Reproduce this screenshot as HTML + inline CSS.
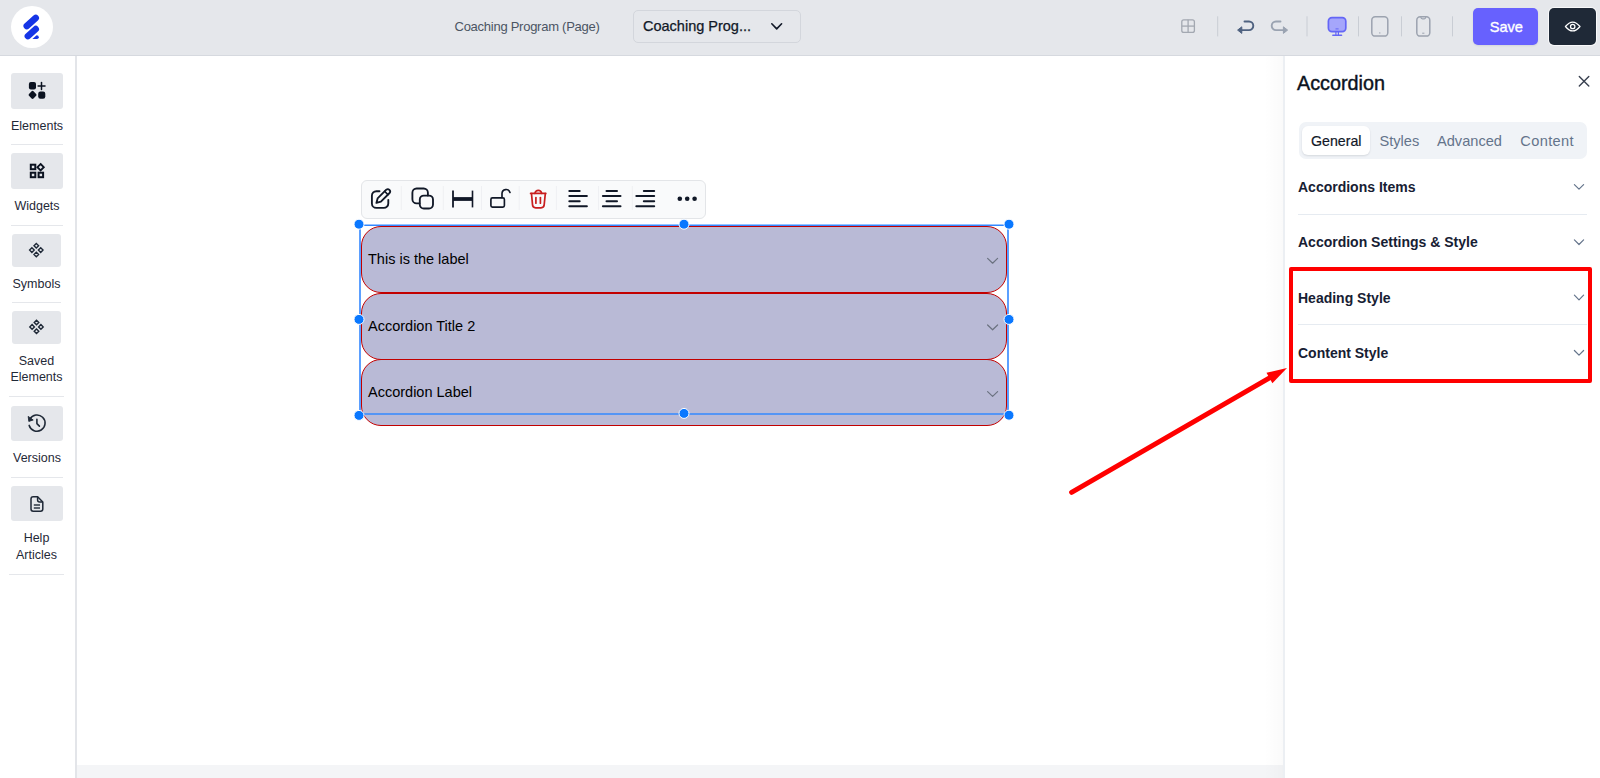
<!DOCTYPE html>
<html><head><meta charset="utf-8">
<style>
*{margin:0;padding:0;box-sizing:border-box}
html,body{width:1600px;height:778px;overflow:hidden;background:#fff;font-family:"Liberation Sans",sans-serif}
.a{position:absolute}
.t{position:absolute;white-space:nowrap;line-height:1}
svg{position:absolute;overflow:visible}
</style></head><body>

<!-- HEADER -->
<div class="a" style="left:0;top:0;width:1600px;height:56px;background:#e5e7eb;border-bottom:1px solid #d6d9df"></div>
<div class="a" style="left:11px;top:6px;width:42px;height:42px;border-radius:50%;background:#fff"></div>
<svg style="left:0;top:0" width="80" height="56">
  <line x1="26.8" y1="26" x2="35.7" y2="18" stroke="#1535e6" stroke-width="6.6" stroke-linecap="round"/>
  <line x1="27.9" y1="36.1" x2="35.7" y2="29.1" stroke="#1535e6" stroke-width="6.6" stroke-linecap="round"/>
  <path d="M32.4 38.9 L36.6 35.3 Q38.8 35.3 38.8 37.3 Q38.7 38.9 37 38.9 Z" fill="#1535e6"/>
</svg>

<div class="t" style="left:454.5px;top:20px;font-size:13px;letter-spacing:-0.26px;color:#4b5563">Coaching Program (Page)</div>
<div class="a" style="left:633px;top:10px;width:168px;height:33px;border:1px solid #d3d6dc;border-radius:5px"></div>
<div class="t" style="left:643px;top:18.9px;font-size:14.5px;color:#111827;-webkit-text-stroke:0.25px #111827">Coaching Prog...</div>
<svg style="left:0;top:0" width="1" height="1">
  <polyline points="771.8,23.8 776.7,28.9 781.6,23.8" fill="none" stroke="#111827" stroke-width="1.6" stroke-linecap="round" stroke-linejoin="round"/>
</svg>

<!-- header right icons -->
<svg style="left:0;top:0" width="1" height="1">
  <rect x="1181.8" y="19.8" width="12.6" height="12.6" rx="2" fill="none" stroke="#a3a8b1" stroke-width="1.3"/>
  <line x1="1188.1" y1="19.8" x2="1188.1" y2="32.4" stroke="#a3a8b1" stroke-width="1.3"/>
  <line x1="1181.8" y1="26.1" x2="1194.4" y2="26.1" stroke="#a3a8b1" stroke-width="1.3"/>
  <g stroke="#c9cdd4" stroke-width="1">
    <line x1="1217.7" y1="16.3" x2="1217.7" y2="36.4"/>
    <line x1="1307" y1="16.3" x2="1307" y2="36.4"/>
    <line x1="1358.5" y1="16.3" x2="1358.5" y2="36.4"/>
    <line x1="1401.5" y1="16.3" x2="1401.5" y2="36.4"/>
    <line x1="1452.5" y1="16.3" x2="1452.5" y2="36.4"/>
  </g>
  <!-- undo -->
  <path d="M1244.5 21.5 H1249 A4.3 4.3 0 0 1 1249 30.1 H1240" fill="none" stroke="#4f6280" stroke-width="1.9" stroke-linecap="round"/>
  <path d="M1237.6 30.1 L1241.8 26.8 L1241.8 33.4 Z" fill="#4f6280" stroke="#4f6280" stroke-width="1" stroke-linejoin="round"/>
  <!-- redo -->
  <path d="M1280.5 21.5 H1276 A4.3 4.3 0 0 0 1276 30.1 H1285" fill="none" stroke="#9aa3b1" stroke-width="1.9" stroke-linecap="round"/>
  <path d="M1287.6 30.1 L1283.4 26.8 L1283.4 33.4 Z" fill="#9aa3b1" stroke="#9aa3b1" stroke-width="1" stroke-linejoin="round"/>
  <!-- desktop -->
  <rect x="1328.4" y="17.6" width="17.4" height="14" rx="3.6" fill="#a5a6fb" stroke="#6466f6" stroke-width="1.7"/>
  <line x1="1335.5" y1="28.9" x2="1338.6" y2="28.9" stroke="#6466f6" stroke-width="1"/>
  <line x1="1335.9" y1="31.6" x2="1335.9" y2="35" stroke="#6466f6" stroke-width="1.2"/>
  <line x1="1338.4" y1="31.6" x2="1338.4" y2="35" stroke="#6466f6" stroke-width="1.2"/>
  <line x1="1332.8" y1="35.2" x2="1341.6" y2="35.2" stroke="#6466f6" stroke-width="1.4" stroke-linecap="round"/>
  <!-- tablet -->
  <rect x="1371.8" y="16.8" width="16" height="19.3" rx="3.4" fill="none" stroke="#9ca3af" stroke-width="1.5"/>
  <circle cx="1379.8" cy="32.9" r="0.7" fill="#9ca3af"/>
  <!-- phone -->
  <rect x="1416.8" y="16.8" width="13" height="19.3" rx="3.4" fill="none" stroke="#9ca3af" stroke-width="1.5"/>
  <path d="M1420.8 17 Q1421 18.8 1422.4 18.8 H1424.2 Q1425.6 18.8 1425.8 17" fill="none" stroke="#9ca3af" stroke-width="1.2"/>
  <line x1="1422.2" y1="33.2" x2="1424.4" y2="33.2" stroke="#9ca3af" stroke-width="1"/>
</svg>
<div class="a" style="left:1472.7px;top:7.5px;width:65.3px;height:37.5px;background:#6761fe;border-radius:5px;box-shadow:0 1px 2px rgba(0,0,0,0.08)"></div>
<div class="t" style="left:1489.8px;top:19.6px;font-size:14.6px;color:#fff;-webkit-text-stroke:0.35px #fff;letter-spacing:-0.1px">Save</div>
<div class="a" style="left:1548.8px;top:7.5px;width:47.7px;height:37.5px;background:#1f2937;border-radius:5px;box-shadow:0 0 0 1px rgba(255,255,255,0.75)"></div>
<svg style="left:0;top:0" width="1" height="1">
  <path d="M1565.4 26.5 Q1572.7 17.6 1580 26.5 Q1572.7 35.4 1565.4 26.5 Z" fill="none" stroke="#fff" stroke-width="1.2" stroke-linejoin="round"/>
  <circle cx="1572.7" cy="26.5" r="2.2" fill="none" stroke="#fff" stroke-width="1.3"/>
</svg>

<!-- SIDEBAR -->
<div class="a" style="left:75px;top:56px;width:2px;height:722px;background:#e3e5e9"></div>

<!-- sidebar buttons -->
<div class="a" style="left:11px;top:73px;width:52px;height:36px;background:#e5e7eb;border-radius:3px"></div>
<div class="a" style="left:11px;top:153px;width:52px;height:36px;background:#e5e7eb;border-radius:3px"></div>
<div class="a" style="left:12px;top:234px;width:49px;height:32.5px;background:#e5e7eb;border-radius:3px"></div>
<div class="a" style="left:12px;top:311px;width:49px;height:32.5px;background:#e5e7eb;border-radius:3px"></div>
<div class="a" style="left:11px;top:406px;width:52px;height:35px;background:#e5e7eb;border-radius:3px"></div>
<div class="a" style="left:11px;top:486px;width:52px;height:35px;background:#e5e7eb;border-radius:3px"></div>
<div class="a" style="left:11px;top:144px;width:52px;height:1px;background:#e5e7eb"></div>
<div class="a" style="left:11px;top:225px;width:52px;height:1px;background:#e5e7eb"></div>
<div class="a" style="left:12px;top:302px;width:49px;height:1px;background:#e5e7eb"></div>
<div class="a" style="left:9px;top:396px;width:55px;height:1px;background:#e5e7eb"></div>
<div class="a" style="left:11px;top:477px;width:52px;height:1px;background:#e5e7eb"></div>
<div class="a" style="left:9px;top:574px;width:55px;height:1px;background:#e5e7eb"></div>
<div class="t" style="left:11px;top:119.6px;width:52px;text-align:center;font-size:12.5px;color:#1f2937">Elements</div>
<div class="t" style="left:11px;top:200px;width:52px;text-align:center;font-size:12.5px;color:#1f2937">Widgets</div>
<div class="t" style="left:12px;top:277.5px;width:49px;text-align:center;font-size:12.5px;color:#1f2937">Symbols</div>
<div class="t" style="left:9px;top:354.5px;width:55px;text-align:center;font-size:12.5px;color:#1f2937">Saved</div>
<div class="t" style="left:9px;top:371.2px;width:55px;text-align:center;font-size:12.5px;color:#1f2937">Elements</div>
<div class="t" style="left:11px;top:451.6px;width:52px;text-align:center;font-size:12.5px;color:#1f2937">Versions</div>
<div class="t" style="left:9px;top:532.2px;width:55px;text-align:center;font-size:12.5px;color:#1f2937">Help</div>
<div class="t" style="left:9px;top:549px;width:55px;text-align:center;font-size:12.5px;color:#1f2937">Articles</div>
<svg style="left:0;top:0" width="1" height="1">
  <!-- elements icon -->
  <rect x="28.9" y="82" width="7.1" height="7.4" rx="2" fill="#0b1220"/>
  <path d="M32.55 92.25 L35.15 94.85 L32.55 97.45 L29.95 94.85 Z" fill="#0b1220" stroke="#0b1220" stroke-width="2.7" stroke-linejoin="round"/>
  <rect x="38.2" y="91.6" width="7.1" height="7.1" rx="2.2" fill="#0b1220"/>
  <line x1="41.5" y1="82.4" x2="41.5" y2="89.6" stroke="#0b1220" stroke-width="1.5" stroke-linecap="round"/>
  <line x1="38.1" y1="86.1" x2="45" y2="86.1" stroke="#0b1220" stroke-width="1.5" stroke-linecap="round"/>
  <!-- widgets icon -->
  <g fill="none" stroke="#0b1220" stroke-width="2">
    <rect x="30.8" y="164.7" width="4.5" height="4.5"/>
    <rect x="30.8" y="172.7" width="4.5" height="4.5"/>
    <rect x="38.6" y="172.7" width="4.5" height="4.5"/>
    <path d="M40.6 164 L43.8 167.2 L40.6 170.4 L37.4 167.2 Z" stroke-width="1.8"/>
  </g>
  <!-- symbols icon -->
  <g fill="none" stroke="#1f2937" stroke-width="1.4">
    <path d="M36.3 243.4 L38.6 245.7 L36.3 248 L34 245.7 Z"/>
    <path d="M36.3 252.2 L38.6 254.5 L36.3 256.8 L34 254.5 Z"/>
    <path d="M31.9 247.8 L34.2 250.1 L31.9 252.4 L29.6 250.1 Z"/>
    <path d="M40.7 247.8 L43 250.1 L40.7 252.4 L38.4 250.1 Z"/>
  </g>
  <g fill="none" stroke="#1f2937" stroke-width="1.4">
    <path d="M36.5 320.2 L38.8 322.5 L36.5 324.8 L34.2 322.5 Z"/>
    <path d="M36.5 329 L38.8 331.3 L36.5 333.6 L34.2 331.3 Z"/>
    <path d="M32.1 324.6 L34.4 326.9 L32.1 329.2 L29.8 326.9 Z"/>
    <path d="M40.9 324.6 L43.2 326.9 L40.9 329.2 L38.6 326.9 Z"/>
  </g>
  <!-- versions icon -->
  <path d="M29.9 419.1 A8.1 8.1 0 1 1 29.2 425.4" fill="none" stroke="#1f2937" stroke-width="1.6" stroke-linecap="round"/>
  <path d="M28.2 416.4 L28.8 421.4 L33.2 420 Z" fill="#1f2937" stroke="#1f2937" stroke-width="0.9" stroke-linejoin="round"/>
  <path d="M36.9 419.4 V423.6 L39.4 426.1" fill="none" stroke="#1f2937" stroke-width="1.6" stroke-linecap="round" stroke-linejoin="round"/>
  <!-- help icon -->
  <path d="M33.2 496.8 H37.6 L42.8 502 V509 A2.2 2.2 0 0 1 40.6 511.2 H33.2 A2.2 2.2 0 0 1 31 509 V499 A2.2 2.2 0 0 1 33.2 496.8 Z" fill="none" stroke="#1f2937" stroke-width="1.5" stroke-linejoin="round"/>
  <path d="M37.6 496.8 V500 A2 2 0 0 0 39.6 502 H42.8" fill="none" stroke="#1f2937" stroke-width="1.5"/>
  <line x1="33.8" y1="505" x2="40" y2="505" stroke="#1f2937" stroke-width="1.4"/>
  <line x1="33.8" y1="508" x2="40" y2="508" stroke="#1f2937" stroke-width="1.4"/>
</svg>

<!-- CANVAS bottom strip -->
<div class="a" style="left:77px;top:765px;width:1206px;height:13px;background:#f4f5f7"></div>

<!-- RIGHT PANEL -->
<div class="a" style="left:1264px;top:56px;width:19px;height:722px;background:linear-gradient(to right,rgba(0,0,0,0),rgba(0,0,0,0.018))"></div>
<div class="a" style="left:1283px;top:56px;width:2px;height:722px;background:#eceff3"></div>
<div class="t" style="left:1297px;top:73.8px;font-size:19.8px;color:#0b1220;-webkit-text-stroke:0.4px #0b1220">Accordion</div>
<svg style="left:0;top:0" width="1" height="1">
  <g stroke="#394150" stroke-width="1.4" stroke-linecap="round">
  <line x1="1579.3" y1="76.5" x2="1588.8" y2="86"/>
  <line x1="1588.8" y1="76.5" x2="1579.3" y2="86"/>
  </g>
</svg>
<div class="a" style="left:1298.5px;top:122px;width:288.2px;height:36.8px;background:#f0f3f7;border-radius:7px"></div>
<div class="a" style="left:1302px;top:126px;width:68px;height:29px;background:#fff;border-radius:6px;box-shadow:0 1px 2px rgba(15,23,42,0.12)"></div>
<div class="t" style="left:1311px;top:134px;font-size:14.2px;color:#111827;-webkit-text-stroke:0.2px #111827">General</div>
<div class="t" style="left:1379.5px;top:134px;font-size:14.6px;color:#64748b">Styles</div>
<div class="t" style="left:1437px;top:134px;font-size:14.6px;color:#64748b">Advanced</div>
<div class="t" style="left:1520.3px;top:134px;font-size:14.6px;letter-spacing:0.37px;color:#64748b">Content</div>

<div class="t" style="left:1298px;top:180.2px;font-size:14px;font-weight:700;color:#172033">Accordions Items</div>
<div class="t" style="left:1298px;top:235px;font-size:14px;font-weight:700;color:#172033">Accordion Settings &amp; Style</div>
<div class="t" style="left:1298px;top:291.2px;font-size:14px;font-weight:700;color:#172033">Heading Style</div>
<div class="t" style="left:1298px;top:346.2px;font-size:14px;font-weight:700;color:#172033">Content Style</div>
<div class="a" style="left:1298px;top:214px;width:289px;height:1px;background:#e6ebf1"></div>
<div class="a" style="left:1298px;top:269px;width:289px;height:1px;background:#e6ebf1"></div>
<div class="a" style="left:1298px;top:324px;width:289px;height:1px;background:#e6ebf1"></div>
<div class="a" style="left:1298px;top:380px;width:289px;height:1px;background:#e6ebf1"></div>
<svg style="left:0;top:0" width="1" height="1">
  <g fill="none" stroke="#64748b" stroke-width="1.2" stroke-linecap="round" stroke-linejoin="round">
  <polyline points="1574.4,184.6 1579,189.2 1583.6,184.6"/>
  <polyline points="1574.4,239.9 1579,244.5 1583.6,239.9"/>
  <polyline points="1574.4,295.2 1579,299.8 1583.6,295.2"/>
  <polyline points="1574.4,350.5 1579,355.1 1583.6,350.5"/>
  </g>
</svg>
<div class="a" style="left:1289px;top:267.4px;width:303.4px;height:115.2px;border:4px solid #ff0000;border-radius:2px"></div>

<!-- TOOLBAR -->
<div class="a" style="left:361px;top:179.5px;width:345px;height:39px;background:#f9fafb;border:1px solid #e3e5e8;border-radius:6px"></div>
<svg style="left:0;top:0" width="1" height="1">
  <g stroke="#eff0f3" stroke-width="1">
    <line x1="401.3" y1="186" x2="401.3" y2="210"/>
    <line x1="443.3" y1="186" x2="443.3" y2="210"/>
    <line x1="481.5" y1="186" x2="481.5" y2="210"/>
    <line x1="519.2" y1="186" x2="519.2" y2="210"/>
    <line x1="556.4" y1="186" x2="556.4" y2="210"/>
    <line x1="598.5" y1="186" x2="598.5" y2="210"/>
    <line x1="632.3" y1="186" x2="632.3" y2="210"/>
  </g>
  <g fill="none" stroke="#111827" stroke-width="1.85" stroke-linecap="round" stroke-linejoin="round">
    <!-- edit -->
    <path d="M379.5 191.2 H376.4 A4.5 4.5 0 0 0 371.9 195.7 V203.4 A4.5 4.5 0 0 0 376.4 207.9 H383.8 A4.5 4.5 0 0 0 388.3 203.4 V199.8"/>
    <path d="M376.4 202.9 L377.6 198.4 L386.3 189.7 A2.35 2.35 0 0 1 389.6 193 L380.9 201.7 Z"/>
    <line x1="384.7" y1="191.4" x2="387.9" y2="194.6" stroke-width="1.5"/>
    <!-- copy -->
    <path d="M419.5 203.35 H416.6 A4.2 4.2 0 0 1 412.4 199.15 V192.7 A4.2 4.2 0 0 1 416.6 188.5 H423.7 A4.2 4.2 0 0 1 427.9 192.7 V195.6"/>
    <rect x="419.8" y="195.6" width="13.2" height="12.9" rx="4"/>
    <!-- width -->
    <line x1="453" y1="190.6" x2="453" y2="207.4" stroke-width="1.8" stroke-linecap="butt"/>
    <line x1="472.5" y1="190.6" x2="472.5" y2="207.4" stroke-width="1.6" stroke-linecap="butt"/>
    <line x1="453" y1="199" x2="472.5" y2="199" stroke-width="3.8" stroke-linecap="butt"/>
    <!-- lock -->
    <rect x="490.9" y="197.9" width="13.5" height="9.2" rx="1.5" stroke-width="1.65"/>
    <path d="M502 197.6 V193.6 A4.1 4.1 0 0 1 510 192.4" stroke-width="1.65"/>
    <!-- align left -->
    <line x1="569.3" y1="191" x2="579.7" y2="191" stroke-width="2"/>
    <line x1="569.3" y1="196.1" x2="586.9" y2="196.1" stroke-width="2"/>
    <line x1="569.3" y1="201.2" x2="579.7" y2="201.2" stroke-width="2"/>
    <line x1="569.3" y1="206.3" x2="586.9" y2="206.3" stroke-width="2"/>
    <!-- align center -->
    <line x1="606.5" y1="191" x2="617" y2="191" stroke-width="2"/>
    <line x1="602.9" y1="196.1" x2="620.5" y2="196.1" stroke-width="2"/>
    <line x1="606.5" y1="201.2" x2="617" y2="201.2" stroke-width="2"/>
    <line x1="602.9" y1="206.3" x2="620.5" y2="206.3" stroke-width="2"/>
    <!-- align right -->
    <line x1="643.8" y1="191" x2="654.2" y2="191" stroke-width="2"/>
    <line x1="636.3" y1="196.1" x2="654.2" y2="196.1" stroke-width="2"/>
    <line x1="643.8" y1="201.2" x2="654.2" y2="201.2" stroke-width="2"/>
    <line x1="636.3" y1="206.3" x2="654.2" y2="206.3" stroke-width="2"/>
  </g>
  <g fill="#111827">
    <circle cx="679.8" cy="198.8" r="2.3"/>
    <circle cx="687.2" cy="198.8" r="2.3"/>
    <circle cx="694.6" cy="198.8" r="2.3"/>
  </g>
  <!-- trash -->
  <g fill="none" stroke="#c81e1e" stroke-width="1.7" stroke-linecap="round" stroke-linejoin="round">
    <line x1="530.6" y1="193.4" x2="545.8" y2="193.4"/>
    <path d="M534.9 193.4 Q535.6 190.4 538.3 190.4 Q541 190.4 541.7 193.4"/>
    <path d="M531.5 193.6 L532.5 204.6 A3.2 3.2 0 0 0 535.7 207.8 H541 A3.2 3.2 0 0 0 544.2 204.6 L545.3 193.6"/>
    <line x1="535.9" y1="197.6" x2="535.9" y2="203.2"/>
    <line x1="540.4" y1="197.6" x2="540.4" y2="203.2"/>
  </g>
</svg>

<!-- ACCORDION -->
<div class="a" style="left:360.5px;top:226.3px;width:646.5px;height:66.4px;background:#b9bad6;border:1px solid #c20000;border-radius:20px"></div>
<div class="a" style="left:360.5px;top:292.6px;width:646.5px;height:67px;background:#b9bad6;border:1px solid #c20000;border-radius:20px"></div>
<div class="a" style="left:360.5px;top:359.4px;width:646.5px;height:66.4px;background:#b9bad6;border:1px solid #c20000;border-radius:20px"></div>
<div class="t" style="left:368px;top:252.2px;font-size:14.5px;color:#000">This is the label</div>
<div class="t" style="left:368px;top:318.8px;font-size:14.5px;color:#000">Accordion Title 2</div>
<div class="t" style="left:368px;top:384.6px;font-size:14.5px;color:#000">Accordion Label</div>
<svg style="left:0;top:0" width="1" height="1">
  <g fill="none" stroke="#6b7280" stroke-width="1.2" stroke-linecap="round" stroke-linejoin="round">
  <polyline points="987.6,258.4 992.6,263.2 997.6,258.4"/>
  <polyline points="987.6,325 992.6,329.8 997.6,325"/>
  <polyline points="987.6,391.6 992.6,396.4 997.6,391.6"/>
  </g>
</svg>
<!-- SELECTION -->
<svg style="left:0;top:0" width="1" height="1">
  <g stroke="#3388ff" stroke-width="1.6">
  <line x1="359" y1="225.3" x2="1009" y2="225.3"/>
  <line x1="359" y1="414" x2="1009" y2="414"/>
  <line x1="360" y1="224" x2="360" y2="415"/>
  <line x1="1008" y1="224" x2="1008" y2="415"/>
  </g>
  <g fill="#0a78ff" stroke="#fff" stroke-width="1">
  <circle cx="359" cy="224.2" r="5"/>
  <circle cx="684" cy="224.2" r="5"/>
  <circle cx="1009" cy="224.2" r="5"/>
  <circle cx="359" cy="319.4" r="5"/>
  <circle cx="1009" cy="319.4" r="5"/>
  <circle cx="359" cy="415.4" r="5"/>
  <circle cx="684" cy="413.4" r="5"/>
  <circle cx="1009" cy="415.2" r="5"/>
  </g>
</svg>

<!-- ARROW -->
<svg style="left:0;top:0" width="1" height="1">
  <line x1="1071.6" y1="492.3" x2="1270" y2="377.6" stroke="#ff0000" stroke-width="5" stroke-linecap="round"/>
  <path d="M1287 368.1 L1266.5 372.7 L1272.4 383.3 Z" fill="#ff0000"/>
</svg>
</body></html>
